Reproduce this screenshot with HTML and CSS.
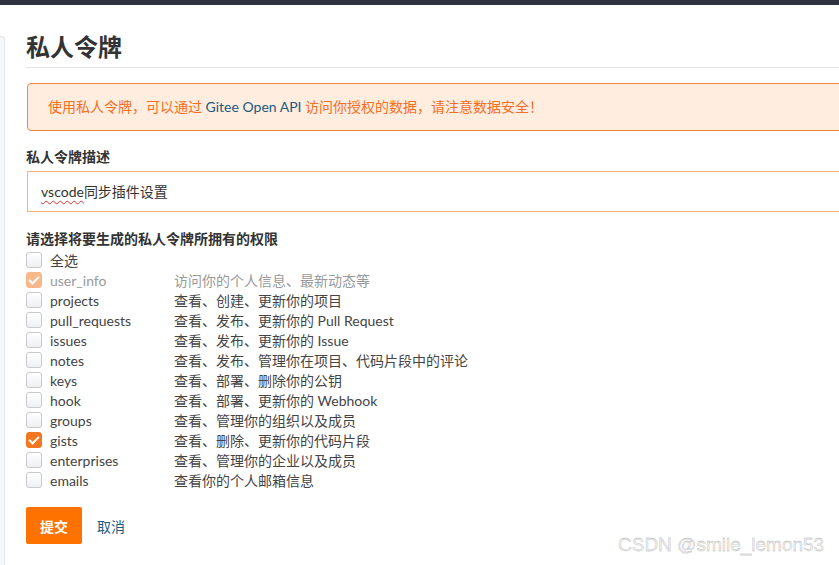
FILE: index.html
```html
<!DOCTYPE html>
<html lang="zh-CN">
  <head>
    <meta charset="UTF-8" />
    <title>私人令牌</title>
    <link rel="stylesheet" href="styles.css">
  </head>
  <body>
    <div class="topbar"></div>
    <div class="page">
      <aside class="sidebar"></aside>
      <main class="main">
        <h1 class="title">私人令牌</h1>
        <div class="alert">
          使用私人令牌，可以通过 <span class="api">Gitee Open API</span> 访问你授权的数据，请注意数据安全！
        </div>
        <label class="label">私人令牌描述</label>
        <div class="input"><span class="typo">vscode</span>同步插件设置</div>
        <label class="label scopes-label">请选择将要生成的私人令牌所拥有的权限</label>
        <ul class="scopes">
          <li><span class="box"></span><span class="name">全选</span></li>
          <li class="disabled"><span class="box checked"></span><span class="name">user_info</span><span class="desc">访问你的个人信息、最新动态等</span></li>
          <li><span class="box"></span><span class="name">projects</span><span class="desc">查看、创建、更新你的项目</span></li>
          <li><span class="box"></span><span class="name">pull_requests</span><span class="desc">查看、发布、更新你的 Pull Request</span></li>
          <li><span class="box"></span><span class="name">issues</span><span class="desc">查看、发布、更新你的 Issue</span></li>
          <li><span class="box"></span><span class="name">notes</span><span class="desc">查看、发布、管理你在项目、代码片段中的评论</span></li>
          <li><span class="box"></span><span class="name">keys</span><span class="desc">查看、部署、删除你的公钥</span></li>
          <li><span class="box"></span><span class="name">hook</span><span class="desc">查看、部署、更新你的 Webhook</span></li>
          <li><span class="box"></span><span class="name">groups</span><span class="desc">查看、管理你的组织以及成员</span></li>
          <li><span class="box checked"></span><span class="name">gists</span><span class="desc">查看、删除、更新你的代码片段</span></li>
          <li><span class="box"></span><span class="name">enterprises</span><span class="desc">查看、管理你的企业以及成员</span></li>
          <li><span class="box"></span><span class="name">emails</span><span class="desc">查看你的个人邮箱信息</span></li>
        </ul>
        <div class="actions">
          <button class="btn-submit">提交</button>
          <a class="cancel" href="#">取消</a>
        </div>
      </main>
    </div>
    <div class="watermark">CSDN @smile_lemon53</div>
  </body>
</html>
```

FILE: styles.css
```css
* {
  box-sizing: border-box;
  margin: 0;
  padding: 0;
}
body {
  font-family: Lato, "Noto Sans CJK SC", sans-serif;
  font-size: 14px;
  color: #444;
  background: #fff;
  width: 839px;
  height: 565px;
  overflow: hidden;
  position: relative;
}
.topbar {
  height: 5px;
  background: #2e3340;
}
.page {
  display: flex;
  gap: 21px;
}
.sidebar {
  flex: 0 0 5px;
  margin-top: 31px;
  height: 540px;
  background: #f7f8fa;
  border: 1px solid #e3e5e8;
  border-left: none;
  border-radius: 0 4px 0 0;
}
.main {
  flex: 0 0 840px;
}
.title {
  font-size: 24px;
  font-weight: bold;
  color: #333;
  line-height: 32px;
  padding-top: 26px;
  padding-bottom: 4px;
  border-bottom: 1px solid #e3e3e3;
}
.alert {
  margin-top: 15px;
  margin-left: 1px;
  height: 48px;
  line-height: 46px;
  padding-left: 20px;
  background: #ffeddf;
  border: 1px solid #f5833a;
  border-radius: 4px;
  color: #f66e22;
}
.api {
  color: #1e5a80;
}
.label {
  display: block;
  font-weight: bold;
  color: #333;
  line-height: 20px;
}
.alert + .label {
  margin-top: 16px;
}
.input {
  margin-top: 4px;
  margin-left: 1px;
  height: 41px;
  line-height: 39px;
  padding-left: 13px;
  border: 1px solid #f9b070;
  color: #333;
}
.typo {
  text-decoration: underline wavy #e03030;
  text-decoration-thickness: 1px;
  text-underline-offset: 3px;
}
.scopes-label {
  margin-top: 17px;
}
.scopes {
  list-style: none;
  margin-top: 1px;
}
.scopes li {
  display: flex;
  align-items: center;
  height: 20px;
}
.box {
  width: 16px;
  height: 16px;
  border: 1px solid #c8cacd;
  border-radius: 3px;
  background: linear-gradient(#fff, #eef0f2);
  margin-right: 8px;
  position: relative;
}
.box.checked {
  background: #f57620;
  border-color: #f57620;
}
.box.checked::after {
  content: "";
  position: absolute;
  left: 4px;
  top: 1px;
  width: 4px;
  height: 8px;
  border: solid #fff;
  border-width: 0 2px 2px 0;
  transform: rotate(45deg);
}
.disabled .box.checked {
  background: #f9b88a;
  border-color: #f9b88a;
}
.name {
  width: 124px;
}
.disabled {
  color: #9a9a9a;
}
.actions {
  margin-top: 17px;
  display: flex;
  align-items: center;
  gap: 15px;
}
.btn-submit {
  width: 56px;
  height: 37px;
  background: #fe7300;
  color: #fff;
  border: none;
  border-radius: 2px;
  font-family: inherit;
  font-size: 14px;
  font-weight: bold;
}
.cancel {
  color: #1e5a80;
  text-decoration: none;
}
.watermark {
  position: absolute;
  left: 618px;
  top: 534px;
  font-family: "Liberation Sans", sans-serif;
  font-size: 19px;
  color: #f2f2f2;
  -webkit-text-stroke: 0.3px #a8a8a8;
}
```
